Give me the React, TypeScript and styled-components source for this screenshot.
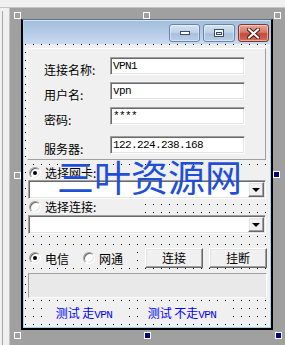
import React from "react";
import styled, { createGlobalStyle } from "styled-components";

const GlobalStyle = createGlobalStyle`
  html, body {
    margin: 0;
    padding: 0;
  }
  body {
    width: 285px;
    height: 345px;
    overflow: hidden;
    background: #a0a0a0;
    font-family: "Noto Sans CJK SC", "Liberation Sans", sans-serif;
    font-size: 12px;
    color: #000;
  }
`;

const Screen = styled.div`
  width: 285px;
  height: 345px;
  display: flex;
  flex-direction: column;
  background: #a0a0a0;
  overflow: hidden;
`;

const TopStrip = styled.div`
  flex: none;
  height: 7px;
  background: #f0f0f0;
  border-bottom: 1px solid #c4c4c4;
  overflow: hidden;
`;

const Body = styled.div`
  flex: 1;
  display: flex;
`;

const LeftStrip = styled.div`
  flex: none;
  width: 10px;
  background: #f0f0f0;
  border-right: 1px solid #c4c4c4;
  display: flex;
  padding-left: 2px;
  box-sizing: border-box;
`;

const StripLine = styled.div`
  width: 1px;
  margin-top: 3px;
  background: #a8a8a8;
`;

const Canvas = styled.div`
  flex: 1;
  padding: 11px 0 0 11px;
`;

/* the form being designed, with its sizing handles */
const Selection = styled.div`
  position: relative;
  width: 252px;
  height: 311px;
`;

const Handle = styled.div<{ $x: number; $y: number; $filled?: boolean }>`
  position: absolute;
  left: ${(p) => p.$x}px;
  top: ${(p) => p.$y}px;
  width: 7px;
  height: 7px;
  box-sizing: border-box;
  border: 1px solid #fff;
  background: ${(p) => (p.$filled ? "#000080" : "transparent")};
`;

const FormWindow = styled.div`
  width: 100%;
  height: 100%;
  box-sizing: border-box;
  border: 2px solid #000;
  border-top: 1px solid #5d6f86;
  display: flex;
  flex-direction: column;
`;

const Frame = styled.div`
  flex: 1;
  display: flex;
  flex-direction: column;
  border: 1px solid #a6d2f0;
  border-top: none;
`;

const TitleBar = styled.div`
  flex: none;
  height: 24px;
  box-sizing: border-box;
  background: linear-gradient(#a2bddd, #bcd1ea 70%, #c9dbef);
  border-top: 1px solid #dce7f3;
  display: flex;
  justify-content: flex-end;
  align-items: flex-start;
  gap: 3px;
  padding: 3px 1px 0 0;
`;

const CaptionButton = styled.div<{ $close?: boolean; $w: number }>`
  width: ${(p) => p.$w}px;
  height: 18px;
  box-sizing: border-box;
  border: 1px solid ${(p) => (p.$close ? "#843629" : "#6a84a8")};
  border-radius: 3px;
  background: ${(p) =>
    p.$close
      ? "linear-gradient(#e7a697, #d67a68 45%, #c6493a 55%, #d56b58)"
      : "linear-gradient(#d5e3f2, #bfd2e8 45%, #a9c0dd 55%, #b9cde6)"};
  box-shadow: inset 0 0 0 1px rgba(255, 255, 255, 0.45);
  display: flex;
  align-items: center;
  justify-content: center;
`;

const Client = styled.div`
  flex: 1;
  position: relative;
  display: flex;
  flex-direction: column;
  align-items: flex-start;
  background-color: #f0f0f0;
  background-image: linear-gradient(90deg, transparent 1px, #f0f0f0 1px),
    linear-gradient(#000 1px, #f0f0f0 1px);
  background-size: 8px 8px;
  background-position: 1px 0;
`;

const Panel = styled.div`
  margin: 4px 0 0 3px;
  width: 239px;
  height: 112px;
  box-sizing: border-box;
  background: #f0f0f0;
  border: 1px solid;
  border-color: #fff #a0a0a0 #a0a0a0 #fff;
  display: flex;
  flex-direction: column;
  padding: 8px 0 0 16px;
`;

const FieldRow = styled.div<{ $gap: number }>`
  display: flex;
  align-items: flex-end;
  margin-top: ${(p) => p.$gap}px;
`;

const FieldLabel = styled.span`
  width: 66px;
  line-height: 14px;
  margin-bottom: -2px;
  white-space: nowrap;
`;

const sunken = `
  border: 1px solid;
  border-color: #a0a0a0 #fff #fff #a0a0a0;
  box-shadow: inset 1px 1px 0 #696969, inset -1px -1px 0 #e3e3e3;
`;

const raised = `
  border: 1px solid;
  border-color: #fff #696969 #696969 #fff;
  box-shadow: inset -1px -1px 0 #a0a0a0, inset 1px 1px 0 #e3e3e3;
`;

const TextBox = styled.div`
  width: 135px;
  height: 18px;
  box-sizing: border-box;
  background: #fff;
  ${sunken}
  padding-left: 2px;
  font-family: "Liberation Mono", monospace;
  font-size: 11px;
  letter-spacing: -0.6px;
  line-height: 16px;
`;

const Mono = styled.span`
  font-family: "Liberation Mono", monospace;
  font-size: 11px;
  letter-spacing: -0.6px;
`;

const RadioItem = styled.div<{ $w: number; $top?: number }>`
  width: ${(p) => p.$w}px;
  height: 13px;
  margin: ${(p) => p.$top ?? 0}px 0 0 3px;
  background: #f0f0f0;
  display: flex;
  align-items: center;
  gap: 4px;
  padding-left: 2px;
  box-sizing: border-box;
  line-height: 13px;
  white-space: nowrap;
`;

const RadioCircle = styled.span<{ $checked?: boolean }>`
  flex: none;
  position: relative;
  width: 12px;
  height: 12px;
  box-sizing: border-box;
  border-radius: 50%;
  border: 1px solid;
  border-color: #a0a0a0 #fff #fff #a0a0a0;
  background: #fff;
  box-shadow: inset 1px 1px 0 #696969, inset -1px -1px 0 #e3e3e3;

  &::after {
    content: "";
    display: ${(p) => (p.$checked ? "block" : "none")};
    position: absolute;
    left: 3px;
    top: 3px;
    width: 4px;
    height: 4px;
    border-radius: 50%;
    background: #000;
  }
`;

const Combo = styled.div<{ $top: number }>`
  width: 238px;
  height: 19px;
  margin: ${(p) => p.$top}px 0 0 4px;
  box-sizing: border-box;
  background: #fff;
  ${sunken}
  display: flex;
  justify-content: flex-end;
  padding: 1px;
`;

const DropButton = styled.div`
  width: 16px;
  height: 15px;
  box-sizing: border-box;
  background: #f0f0f0;
  ${raised}
  display: flex;
  align-items: center;
  justify-content: center;

  &::after {
    content: "";
    border-left: 4px solid transparent;
    border-right: 4px solid transparent;
    border-top: 4px solid #000;
    margin-top: 1px;
  }
`;

const ActionRow = styled.div`
  margin-top: 14px;
  display: flex;
  align-items: center;
  height: 20px;
`;

const PushButton = styled.div<{ $left: number }>`
  width: 58px;
  height: 20px;
  margin-left: ${(p) => p.$left}px;
  box-sizing: border-box;
  background: #f0f0f0;
  ${raised}
  display: flex;
  align-items: center;
  justify-content: center;
  line-height: 14px;
`;

const StatusPanel = styled.div`
  margin: 5px 0 0 4px;
  width: 239px;
  height: 25px;
  box-sizing: border-box;
  background: #e9e9e9;
  border: 1px solid;
  border-color: #a0a0a0 #fff #fff #a0a0a0;
`;

const LinkRow = styled.div`
  margin: 8px 0 0 19px;
  display: flex;
  gap: 13px;
`;

const LinkLabel = styled.div<{ $w: number }>`
  width: ${(p) => p.$w}px;
  height: 14px;
  background: #f0f0f0;
  color: #0000ff;
  line-height: 14px;
  text-align: center;
  white-space: nowrap;
`;

const Watermark = styled.div`
  position: absolute;
  left: 33px;
  top: 114px;
  font-family: "Noto Sans CJK SC", sans-serif;
  font-size: 37px;
  line-height: 37px;
  color: #1f4fd8;
  white-space: nowrap;
  pointer-events: none;
`;

const ToolbarScraps = () => (
  <svg width="285" height="7" viewBox="0 0 285 7">
    <g fill="none" stroke="#8c8c8c" strokeWidth="1">
      <path d="M12.5 0 V6" />
      <path d="M34 5.5 H50 M42.5 0 V5.5" />
      <path d="M70.5 0 V5.5 H86" />
      <path d="M110 5.5 H126 M118.5 0 V5.5" />
      <path d="M150 5.5 H166 M158.5 0 V5.5" />
      <path d="M207.5 0 V4.5 H222.5 V0" />
      <path d="M234.5 0 V4.5 H249.5 V0" />
      <path d="M273.5 0 V7" />
    </g>
  </svg>
);

const MinIcon = () => (
  <svg width="12" height="6" viewBox="0 0 12 6">
    <rect x="1.5" y="1.5" width="9" height="3" fill="#fff" stroke="#3b4d66" />
  </svg>
);

const MaxIcon = () => (
  <svg width="12" height="10" viewBox="0 0 12 10">
    <rect x="1.5" y="1.5" width="9" height="7" fill="#fff" stroke="#3b4d66" />
    <rect x="3.5" y="4.5" width="5" height="2" fill="#dfe8f3" stroke="#3b4d66" />
  </svg>
);

const CloseIcon = () => (
  <svg width="13" height="11" viewBox="0 0 13 11">
    <path
      d="M2 1.5 L11 9.5 M11 1.5 L2 9.5"
      stroke="#4a1d17"
      strokeWidth="4"
      strokeLinecap="square"
    />
    <path
      d="M2 1.5 L11 9.5 M11 1.5 L2 9.5"
      stroke="#fff"
      strokeWidth="2"
      strokeLinecap="square"
    />
  </svg>
);

const fields = [
  { label: "连接名称:", value: "VPN1", gap: 0 },
  { label: "用户名:", value: "vpn", gap: 7 },
  { label: "密码:", value: "****", gap: 7 },
  { label: "服务器:", value: "122.224.238.168", gap: 11 },
];

export default function App() {
  return (
    <Screen>
      <GlobalStyle />
      <TopStrip>
        <ToolbarScraps />
      </TopStrip>
      <Body>
        <LeftStrip>
          <StripLine />
        </LeftStrip>
        <Canvas>
          <Selection>
            <FormWindow>
              <Frame>
                <TitleBar>
                  <CaptionButton $w={31}>
                    <MinIcon />
                  </CaptionButton>
                  <CaptionButton $w={32}>
                    <MaxIcon />
                  </CaptionButton>
                  <CaptionButton $w={31} $close>
                    <CloseIcon />
                  </CaptionButton>
                </TitleBar>
                <Client>
                  <Panel>
                    {fields.map((f) => (
                      <FieldRow key={f.label} $gap={f.gap}>
                        <FieldLabel>{f.label}</FieldLabel>
                        <TextBox>{f.value}</TextBox>
                      </FieldRow>
                    ))}
                  </Panel>

                  <RadioItem $w={239} $top={6}>
                    <RadioCircle $checked />
                    选择网卡:
                  </RadioItem>
                  <Combo $top={1}>
                    <DropButton />
                  </Combo>

                  <RadioItem $w={112} $top={1}>
                    <RadioCircle />
                    选择连接:
                  </RadioItem>
                  <Combo $top={2}>
                    <DropButton />
                  </Combo>

                  <ActionRow>
                    <RadioItem $w={51}>
                      <RadioCircle $checked />
                      电信
                    </RadioItem>
                    <RadioItem $w={52}>
                      <RadioCircle />
                      网通
                    </RadioItem>
                    <PushButton $left={12}>连接</PushButton>
                    <PushButton $left={6}>挂断</PushButton>
                  </ActionRow>

                  <StatusPanel />

                  <LinkRow>
                    <LinkLabel $w={82}>
                      测试 走<Mono>VPN</Mono>
                    </LinkLabel>
                    <LinkLabel $w={88}>
                      测试 不走<Mono>VPN</Mono>
                    </LinkLabel>
                  </LinkRow>

                  <Watermark>三叶资源网</Watermark>
                </Client>
              </Frame>
            </FormWindow>

            <Handle $x={-7} $y={-7} />
            <Handle $x={122} $y={-7} />
            <Handle $x={253} $y={-7} />
            <Handle $x={-7} $y={153} />
            <Handle $x={252} $y={152} $filled />
            <Handle $x={-7} $y={313} />
            <Handle $x={123} $y={313} $filled />
            <Handle $x={254} $y={313} $filled />
          </Selection>
        </Canvas>
      </Body>
    </Screen>
  );
}
